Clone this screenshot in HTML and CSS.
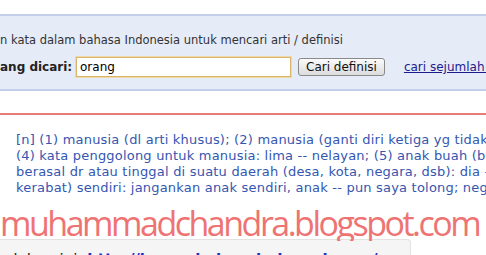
FILE: index.html
```html
<!DOCTYPE html>
<html lang="id">
<head>
  <meta charset="UTF-8" />
  <title>Kamus - orang</title>
  <link rel="stylesheet" href="styles.css">
</head>
<body>
  <div class="search-panel">
    <p class="hint">n kata dalam bahasa Indonesia untuk mencari arti / definisi</p>
    <form class="search-row" onsubmit="return false">
      <label for="kata">ang dicari:</label>
      <input type="text" id="kata" value="orang" />
      <button type="submit">Cari definisi</button>
      <a href="#" class="more">cari sejumlah kata</a>
    </form>
  </div>

  <div class="result">
    <p class="definition">
      [n] (1) manusia (dl arti khusus); (2) manusia (ganti diri ketiga yg tidak tentu)<br>
      (4) kata penggolong untuk manusia: lima -- nelayan; (5) anak buah (bawahan)<br>
      berasal dr atau tinggal di suatu daerah (desa, kota, negara, dsb): dia -- Jawa<br>
      kerabat) sendiri: jangankan anak sendiri, anak -- pun saya tolong; negeri lain
    </p>
  </div>

  <div class="watermark">muhammadchandra.blogspot.com</div>

  <div class="source">
    dalam ini: <a href="#">http://kamusbahasaindonesia.org/orang</a>
  </div>
</body>
</html>
```

FILE: styles.css
```css
body {
  margin: 0;
  font-family: "DejaVu Sans", Verdana, sans-serif;
  background: white;
  overflow: hidden;
}

.search-panel {
  margin-top: 14px;
  background: #e6ebf8;
  border-top: 2px solid #c3cfea;
  border-bottom: 2px solid #c3cfea;
  padding: 17px 0 12px 0;
  overflow: hidden;
}

.hint {
  margin: 0 0 10px 0;
  font-size: 11.5px;
  color: #333;
  white-space: nowrap;
}

.search-row {
  display: flex;
  align-items: center;
  white-space: nowrap;
  font-size: 12px;
}

.search-row label {
  flex: none;
  width: 76px;
  font-weight: bold;
  color: #222;
}

.search-row input {
  flex: none;
  width: 207px;
  height: 16px;
  padding: 1px 3px;
  font-family: "DejaVu Sans", Verdana, sans-serif;
  font-size: 12px;
  border: 1px solid #d9b46a;
  box-shadow: 0 0 0 1px #f0d9a8;
  outline: none;
  background: white;
}

.search-row button {
  flex: none;
  margin-left: 7px;
  height: 18px;
  padding: 0 7px;
  font-family: "DejaVu Sans", Tahoma, sans-serif;
  font-size: 12px;
  color: #111;
  background: linear-gradient(#fbfbfb, #dcdcdc);
  border: 1px solid #8a8a8a;
  border-radius: 3px;
}

.more {
  flex: none;
  margin-left: 19px;
  color: #1c1c8e;
  font-size: 12px;
}

.result {
  margin-top: 22px;
  border-top: 2px solid #e87a78;
  padding: 17px 0 0 16px;
  overflow: hidden;
}

.definition {
  margin: 0;
  font-size: 13px;
  letter-spacing: 0.2px;
  line-height: 16px;
  color: #3556b0;
  white-space: nowrap;
}

.watermark {
  margin-top: 9px;
  font-family: "Open Sans", sans-serif;
  font-size: 34px;
  letter-spacing: -2.5px;
  line-height: 36px;
  color: #ee7474;
  white-space: nowrap;
  overflow: hidden;
}

.source {
  width: 402px;
  height: 40px;
  margin-top: -2px;
  padding: 11px 0 0 8px;
  background: #f5f5f5;
  border: 1px solid #e2e2e2;
  border-left: none;
  border-radius: 0 4px 0 0;
  font-size: 15px;
  color: #222;
  white-space: nowrap;
  overflow: hidden;
}

.source a {
  color: #1c2fd0;
  font-weight: bold;
  text-decoration: none;
}
```
